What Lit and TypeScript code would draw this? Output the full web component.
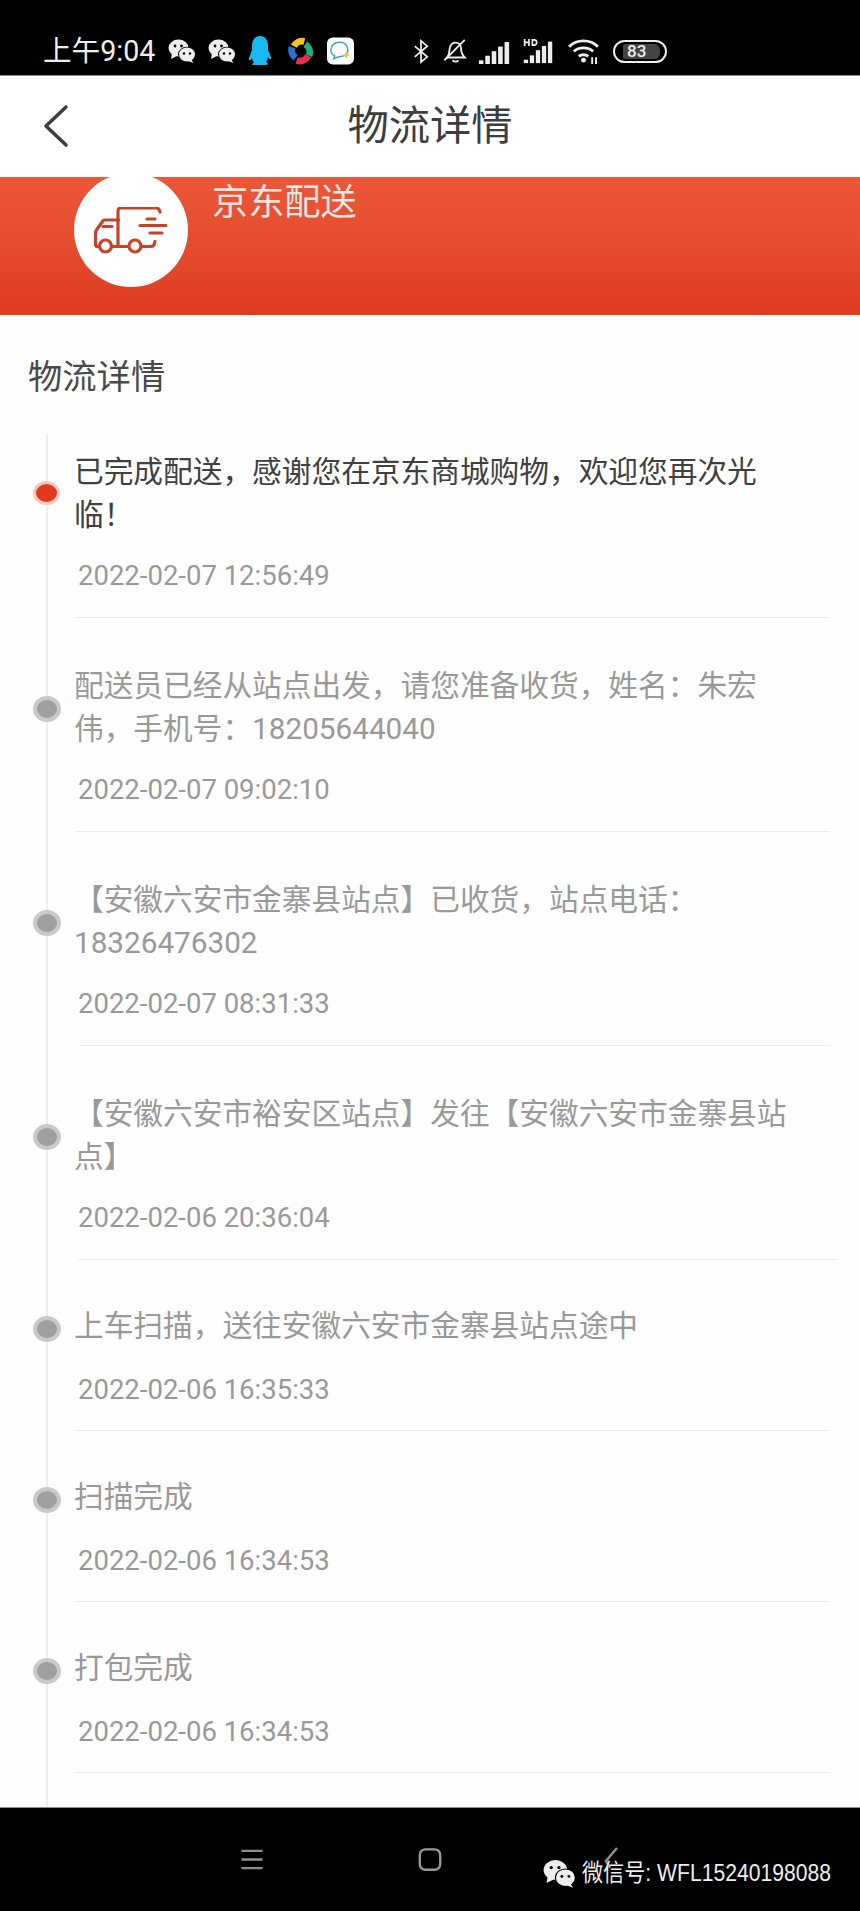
import { LitElement, html, css, svg } from "lit";
import { customElement } from "lit/decorators.js";

interface Row { text: string; time: string; cls?: string }

const ROWS: Row[] = [
  { text: "已完成配送，感谢您在京东商城购物，欢迎您再次光临！", time: "2022-02-07 12:56:49", cls: "active" },
  { text: "配送员已经从站点出发，请您准备收货，姓名：朱宏伟，手机号：18205644040", time: "2022-02-07 09:02:10" },
  { text: "【安徽六安市金寨县站点】已收货，站点电话：18326476302", time: "2022-02-07 08:31:33", cls: "sep-in" },
  { text: "【安徽六安市裕安区站点】发往【安徽六安市金寨县站点】", time: "2022-02-06 20:36:04", cls: "sep-shift" },
  { text: "上车扫描，送往安徽六安市金寨县站点途中", time: "2022-02-06 16:35:33", cls: "single" },
  { text: "扫描完成", time: "2022-02-06 16:34:53", cls: "single" },
  { text: "打包完成", time: "2022-02-06 16:34:53", cls: "single" },
];

const wechat = (cls: string) => svg`<svg class=${cls} viewBox="0 0 28 24">
  <ellipse cx="10.5" cy="9" rx="10" ry="8.5" fill="#eee"/><path d="M4 14l-1 6 6-3z" fill="#eee"/>
  <ellipse cx="19" cy="15.5" rx="9" ry="7.8" fill="#000"/>
  <ellipse cx="19" cy="15.5" rx="8" ry="7" fill="#eee"/><path d="M23 20l2.5 4-5.5-2z" fill="#eee"/>
  <circle cx="7" cy="7" r="1.4" fill="#000"/><circle cx="13.5" cy="7" r="1.4" fill="#000"/>
  <circle cx="16" cy="14.5" r="1.2" fill="#000"/><circle cx="22" cy="14.5" r="1.2" fill="#000"/>
</svg>`;

@customElement("app-root")
export class AppRoot extends LitElement {
  static styles = css`
    :host { display: block; width: 860px; height: 1911px; overflow: hidden; background: #fefefe;
      font-family: Roboto, "Noto Sans CJK SC", sans-serif; }
    .page { display: flex; flex-direction: column; height: 1911px; }

    .status { height: 75px; flex: none; background: #000; border-bottom: 1px solid #8a8a8a; color: #eee;
      display: flex; align-items: flex-end; padding: 0 0 0 43px; }
    .status-in { display: flex; align-items: center; height: 28px; margin-bottom: 10px; }
    .clock { font-size: 28.6px; line-height: 28px; width: 125px; white-space: nowrap; flex: none; }
    .si { display: block; flex: none; }
    .wx { width: 28px; height: 24px; margin-right: 12px; }
    .qq { width: 24px; height: 30px; margin-right: 15px; }
    .ball { width: 27px; height: 28px; margin-right: 13px; }
    .app { width: 27px; height: 28px; margin-right: 59px; }
    .bt { width: 16px; height: 27px; margin-right: 14px; }
    .bell { width: 25px; height: 26px; margin-right: 10px; }
    .sig { width: 32px; height: 22px; margin-right: 12px; margin-top: 3px; }
    .sighd { width: 32px; height: 25px; margin-right: 13px; margin-top: 1px; }
    .wifi { width: 33px; height: 26px; margin-right: 13px; }
    .batt { width: 54px; height: 23px; box-sizing: border-box; border: 2px solid #eee; border-radius: 12px;
      padding: 2px 5px 2px 8px; display: flex; }
    .batt span { flex: 1; background: #444; border-radius: 2px 6px 6px 2px; color: #eee; font-size: 17px;
      line-height: 15px; font-weight: 500; text-align: left; padding-left: 4px; }

    .top { height: 101px; flex: none; background: #fff; position: relative; display: flex; align-items: center;
      justify-content: center; font-size: 41.3px; color: #3d3d3d; }
    .back { position: absolute; left: 43px; top: 28px; width: 26px; height: 44px; }
    .title { line-height: 50px; margin-top: -2px; }

    .banner { height: 138px; flex: none; background: linear-gradient(180deg, #ec5739 0%, #e54b2d 50%, #dd3c20 100%);
      display: flex; gap: 24px; padding-left: 74px; overflow: hidden; }
    .badge { width: 114px; height: 114px; border-radius: 50%; background: #fff; flex: none; margin-top: -4px;
      display: flex; align-items: center; justify-content: center; }
    .truck { width: 73px; height: 47px; margin: 0 0 0 -1px; }
    .carrier { font-size: 36.2px; line-height: 44px; color: #f8e6df; margin-top: 4px; }

    .heading { font-size: 34.3px; line-height: 44px; color: #4a4a4a; padding: 40px 0 0 28px; height: 49px; flex: none; }

    .list { position: relative; flex: 1; min-height: 0; overflow: hidden; }
    .list::before { content: ""; position: absolute; left: 46px; top: 30px; bottom: 0; width: 2px; background: #efefef; }

    .row { margin-left: 74px; margin-right: 30px; padding: 46px 0 0; position: relative; }
    .text { position: relative; max-width: 730px; font-size: 29.7px; line-height: 43px; color: #999; }
    .dot { position: absolute; left: -41px; top: calc(50% - 11px); width: 20px; height: 18px; border-radius: 50%;
      background: #9f9f9f; border: 4px solid #c9c9c9; }
    .time { font-size: 27.5px; line-height: 34px; color: #999; margin: 23px 0 24px 4px; }
    .rule { height: 1px; background: #ececec; margin-left: 1px; }
    .sep-in .rule { margin-left: 6px; }
    .sep-shift .rule { margin: 0 -6px 0 4px; }

    .single { padding-top: 44px; }
    .single .time { margin-top: 26px; margin-bottom: 23px; }
    .single .dot { top: calc(50% - 10px); }

    .active .text { color: #404040; }
    .active .dot { background: #e23a1e; border-color: #f8c9c0; top: calc(50% - 12px); width: 21px; height: 18px; border-width: 3px; }

    .nav { height: 103px; flex: none; background: #000; border-top: 1px solid #8a8a8a; position: relative; }
    .nav-menu { position: absolute; left: 239px; top: 39px; width: 26px; height: 25px; }
    .nav-home { position: absolute; left: 417px; top: 38px; width: 26px; height: 27px; }
    .nav-back { position: absolute; left: 603px; top: 38px; width: 16px; height: 28px; }
    .wm { position: absolute; left: 543px; top: 48px; display: flex; align-items: center; color: #eee; }
    .wm-icon { width: 33px; height: 29px; margin-right: 6px; flex: none; }
    .wm-text { font-family: "Liberation Sans", "Noto Sans CJK SC", sans-serif; font-size: 24px; line-height: 34px;
      white-space: nowrap; transform: scaleX(0.88); transform-origin: left center; }
  `;

  private statusIcons() {
    return html`
      ${wechat("si wx")}${wechat("si wx")}
      <svg class="si qq" viewBox="0 0 24 30"><path fill="#1ab8f0" d="M12 0c5.500 0 8 4.500 8 10v4l3 7c.8 2-.6 3-2 1.500l-1-1.500c-.4 2-1 3.500-2 4.500 2 .7 2.500 3 .5 3.500H5.500C3.500 29.500 4 27.200 6 26.500c-1-1-1.600-2.500-2-4.500l-1 1.500C1.600 25 .2 24 1 22l3-8v-4C4 4.500 6.500 0 12 0z"/></svg>
      <svg class="si ball" viewBox="0 0 28 28" fill="none" stroke-width="7">
        <path stroke="#f4c51c" d="M7 9a10 10 0 0 1 11-5"/><path stroke="#1fae7e" d="M19 7a10 10 0 0 1 4 12"/>
        <path stroke="#e8304e" d="M22 19a10 10 0 0 1-12 5"/><path stroke="#2a6fd6" d="M9 21a10 10 0 0 1-4-11"/>
      </svg>
      <svg class="si app" viewBox="0 0 28 28"><rect width="28" height="28" rx="6" fill="#fff"/>
        <path d="M13 5c-5 0-9 3-9 8 0 3 2 5 4 6l-1 3 5-2c3 0 5 0 7-2 3-2 3-5 2-8-1-3-4-5-8-5z" fill="none" stroke="#3aa4c8" stroke-width="1.500"/>
        <path d="M20 14l1.200 3 3 1.200-3 1.200-1.200 3-1.200-3-3-1.200 3-1.200z" fill="#e8c84a"/>
      </svg>
      <svg class="si bt" viewBox="0 0 18 28" fill="none" stroke="#eee" stroke-width="2"><path d="M2 8l14 12-7 6V2l7 6L2 20"/></svg>
      <svg class="si bell" viewBox="0 0 26 28" fill="none" stroke="#eee" stroke-width="2"><path d="M4 21c3-3 2-7 3-11 1-3 3-5 6-5s6 2 6 6c0 4 1 7 4 10zM10 24c1 2 5 2 6 0" /><path d="M1 24L23 2"/></svg>
      <svg class="si sig" viewBox="0 0 33 24" fill="#eee"><rect x="0" y="20" width="5" height="4"/><rect x="7" y="15" width="5" height="9"/><rect x="14" y="10" width="5" height="14"/><rect x="21" y="5" width="5" height="19"/><rect x="28" y="0" width="5" height="24"/></svg>
      <svg class="si sighd" viewBox="0 0 33 29" fill="#eee"><rect x="0" y="24" width="5" height="4"/><rect x="7" y="19" width="5" height="9"/><rect x="14" y="13" width="5" height="15"/><rect x="21" y="8" width="5" height="20"/><rect x="28" y="3" width="5" height="25"/><path d="M0 0h2v3h3V0h2v8H5V5H2v3H0zM9 0h3c3 0 4 2 4 4s-1 4-4 4H9zm2 2v4h1c1 0 2-1 2-2s-1-2-2-2z"/></svg>
      <svg class="si wifi" viewBox="0 0 34 27" fill="none" stroke="#eee" stroke-width="3"><path d="M2 9c8-8 22-8 30 0M7 14c5-5 15-5 20 0M12 19c3-2 7-2 10 0"/><circle cx="17" cy="23" r="2.500" fill="#eee" stroke="none"/><path d="M26 20v7M30 20v7" stroke-width="2"/></svg>
      <div class="batt"><span>83</span></div>`;
  }

  render() {
    return html`<div class="page">
      <div class="status"><div class="status-in"><span class="clock">上午9:04</span>${this.statusIcons()}</div></div>
      <div class="top">
        <svg class="back" viewBox="0 0 26 44" fill="none" stroke="#3d3d3d" stroke-width="3.500" stroke-linecap="round" stroke-linejoin="round"><path d="M23 3L3 22l20 19"/></svg>
        <span class="title">物流详情</span>
      </div>
      <div class="banner">
        <div class="badge">
          <svg class="truck" viewBox="0 0 73 47" fill="none" stroke="#c8412a" stroke-width="3.200" stroke-linecap="round" stroke-linejoin="round">
            <path d="M5 39.500H3.500C2 39.500 1.500 38 1.500 37V26c0-1 .5-2 1-3l6-8.500c.5-1 1.500-1.500 2.500-1.500h13.500"/>
            <path d="M24 39V4c0-2 1-3 3-3h35c2 0 3.500 1.500 4 4"/>
            <path d="M9 19.500h9"/><path d="M18 39.500h16"/><path d="M48 39.500h9c2 0 3.500-2 4-5"/>
            <circle cx="11.500" cy="39" r="6"/><circle cx="41" cy="39" r="6"/>
            <path d="M53 12h8M46 18.500h26M56 26h12"/>
          </svg>
        </div>
        <div class="carrier">京东配送</div>
      </div>
      <div class="heading">物流详情</div>
      <div class="list">
        ${ROWS.map((r) => html`<div class="row ${r.cls ?? ""}">
          <div class="text"><span class="dot"></span>${r.text}</div>
          <div class="time">${r.time}</div>
          <div class="rule"></div>
        </div>`)}
      </div>
      <div class="nav">
        <svg class="nav-menu" viewBox="0 0 26 26" stroke="#8f8f8f" stroke-width="2.500"><path d="M2 4h22M2 13h22M2 22h22"/></svg>
        <svg class="nav-home" viewBox="0 0 28 28" fill="none" stroke="#9a9a9a" stroke-width="2.500"><rect x="3" y="3" width="22" height="22" rx="6"/></svg>
        <svg class="nav-back" viewBox="0 0 16 28" fill="none" stroke="#8f8f8f" stroke-width="2.500"><path d="M14 2L3 15l4 7"/></svg>
        <div class="wm">${wechat("wm-icon")}<span class="wm-text">微信号: WFL15240198088</span></div>
      </div>
    </div>`;
  }
}
